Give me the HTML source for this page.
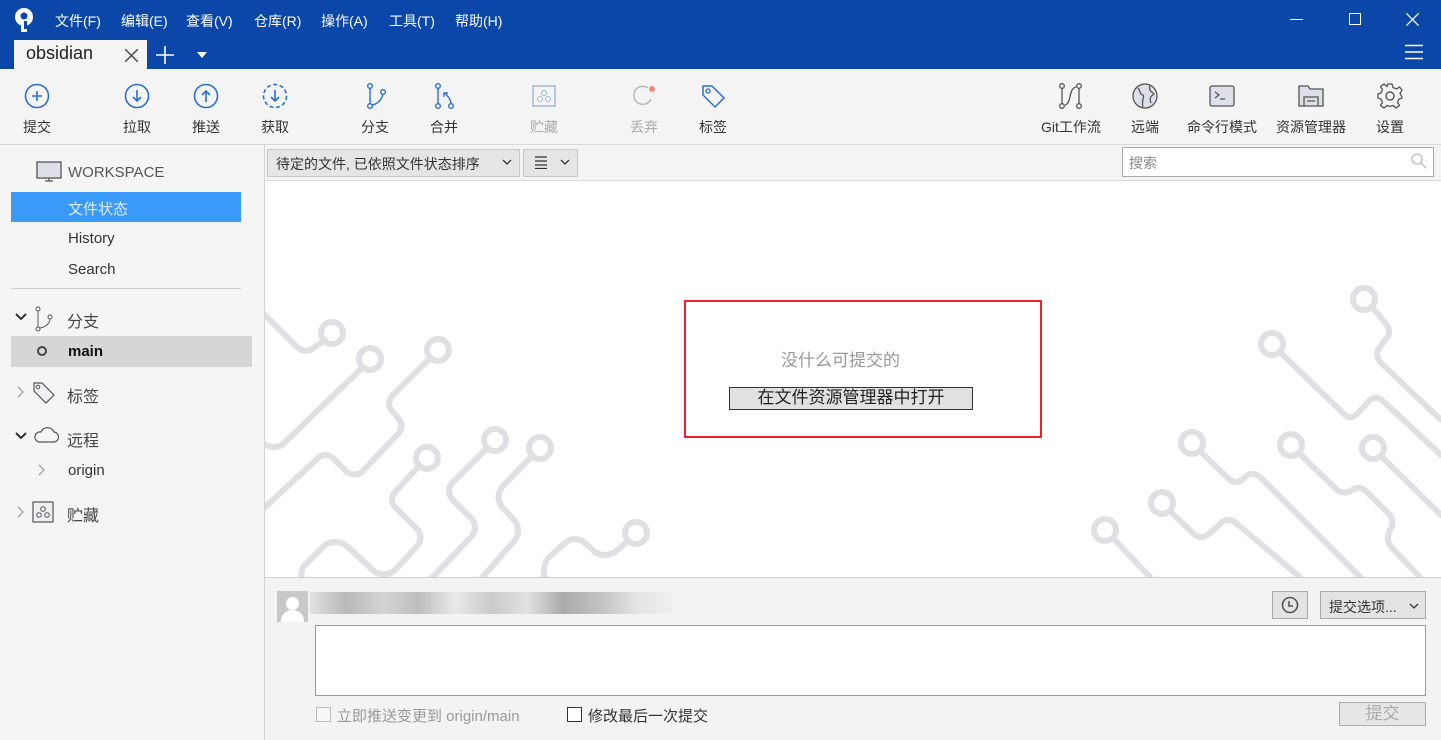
<!DOCTYPE html>
<html><head><meta charset="utf-8"><style>
*{box-sizing:border-box;margin:0;padding:0}
body{width:1441px;height:740px;overflow:hidden;font-family:"Liberation Sans","Noto Sans CJK SC",sans-serif;font-size:14px;color:#333;background:#f4f4f4;position:relative}
.abs{position:absolute}
.title{left:0;top:0;width:1441px;height:69px;background:#0a47a9;color:#fff}
.menu span{position:absolute;top:11px;font-size:14px;color:#fff}
.tb{position:absolute;top:83px;text-align:center;font-size:14px;color:#333;width:70px}
.tb svg{display:block;margin:0 auto 8px}
.side{left:0;top:145px;width:265px;height:595px;background:#f5f5f5;border-right:1px solid #d4d4d4}
.sitem{position:absolute;font-size:15px;color:#333}
</style></head><body>
<div class="abs title">
 <svg class="abs" style="left:13px;top:7px" width="22" height="26" viewBox="0 0 22 26"><circle cx="11" cy="10" r="9" fill="#fff"/><circle cx="11" cy="9" r="3.5" fill="#0a47a9"/><rect x="8" y="14" width="6" height="11" fill="#fff"/><rect x="11" y="14" width="3" height="8" fill="#0a47a9"/></svg>
 <div class="menu"><span style="left:55px">文件(F)</span><span style="left:121px">编辑(E)</span><span style="left:186px">查看(V)</span><span style="left:254px">仓库(R)</span><span style="left:321px">操作(A)</span><span style="left:389px">工具(T)</span><span style="left:455px">帮助(H)</span></div>
 <div class="abs" style="left:1290px;top:19px;width:13px;height:1px;background:#fff"></div>
 <div class="abs" style="left:1349px;top:13px;width:12px;height:12px;border:1px solid #fff"></div>
 <svg class="abs" style="left:1406px;top:13px" width="13" height="13"><path d="M0 0L13 13M13 0L0 13" stroke="#fff" stroke-width="1.3"/></svg>
 <svg class="abs" style="left:1405px;top:44px" width="18" height="16"><path d="M0 1.5H18M0 8H18M0 14.5H18" stroke="#fff" stroke-width="1.6"/></svg>
 <div class="abs" style="left:14px;top:40px;width:133px;height:29px;background:#f4f4f4"></div>
 <span class="abs" style="left:26px;top:43px;font-size:18px;color:#222">obsidian</span>
 <svg class="abs" style="left:125px;top:49px" width="13" height="13"><path d="M0 0L13 13M13 0L0 13" stroke="#555" stroke-width="1.6"/></svg>
 <svg class="abs" style="left:155px;top:45px" width="20" height="20"><path d="M10 1V19M1 10H19" stroke="#fff" stroke-width="1.6"/></svg>
 <svg class="abs" style="left:197px;top:52px" width="10" height="6"><path d="M0 0H10L5 6Z" fill="#fff"/></svg>
</div>
<div class="abs" style="left:0;top:69px;width:1441px;height:76px;background:#f4f4f4;border-bottom:1px solid #d8d8d8"></div>
<div class="tb" style="left:2px"><svg width="26" height="26"><circle cx="13" cy="13" r="11.5" fill="none" stroke="#2a6fd1" stroke-width="1.6"/><path d="M13 8V18M8 13H18" stroke="#2a6fd1" stroke-width="1.6"/></svg>提交</div>
<div class="tb" style="left:102px"><svg width="26" height="26"><circle cx="13" cy="13" r="11.5" fill="none" stroke="#2a6fd1" stroke-width="1.6"/><path d="M13 7V18M9 14L13 18L17 14" fill="none" stroke="#2a6fd1" stroke-width="1.6"/></svg>拉取</div>
<div class="tb" style="left:171px"><svg width="26" height="26"><circle cx="13" cy="13" r="11.5" fill="none" stroke="#2a6fd1" stroke-width="1.6"/><path d="M13 19V8M9 12L13 8L17 12" fill="none" stroke="#2a6fd1" stroke-width="1.6"/></svg>推送</div>
<div class="tb" style="left:240px"><svg width="26" height="26"><circle cx="13" cy="13" r="11.5" fill="none" stroke="#2a6fd1" stroke-width="1.6" stroke-dasharray="4 2.5"/><path d="M13 7V18M9 14L13 18L17 14" fill="none" stroke="#2a6fd1" stroke-width="1.6"/></svg>获取</div>
<div class="tb" style="left:340px"><svg width="26" height="26"><circle cx="8" cy="3" r="2.3" fill="none" stroke="#2a6fd1" stroke-width="1.4"/><circle cx="8" cy="23" r="2.3" fill="none" stroke="#2a6fd1" stroke-width="1.4"/><circle cx="21" cy="9" r="2.3" fill="none" stroke="#2a6fd1" stroke-width="1.4"/><path d="M8 5V21M10 22C16 21 20 16 21 11" fill="none" stroke="#2a6fd1" stroke-width="1.4"/></svg>分支</div>
<div class="tb" style="left:409px"><svg width="26" height="26"><circle cx="7" cy="3" r="2.3" fill="none" stroke="#2a6fd1" stroke-width="1.4"/><circle cx="7" cy="23" r="2.3" fill="none" stroke="#2a6fd1" stroke-width="1.4"/><circle cx="20" cy="23" r="2.3" fill="none" stroke="#2a6fd1" stroke-width="1.4"/><path d="M7 5V21M20 21C20 16 17 14 14 10M13 14V10H17" fill="none" stroke="#2a6fd1" stroke-width="1.4"/></svg>合并</div>
<div class="tb" style="left:509px;color:#aaa"><svg width="26" height="26"><rect x="2" y="3" width="22" height="20" fill="none" stroke="#9fb6d8" stroke-width="1.4"/><circle cx="13" cy="10" r="2.5" fill="none" stroke="#9fb6d8"/><circle cx="9" cy="16" r="2.5" fill="none" stroke="#9fb6d8"/><circle cx="17" cy="16" r="2.5" fill="none" stroke="#9fb6d8"/></svg>贮藏</div>
<div class="tb" style="left:609px;color:#aaa"><svg width="26" height="26"><path d="M20 16A9 9 0 1 1 17 5" fill="none" stroke="#bbb" stroke-width="1.6"/><circle cx="21" cy="6" r="3" fill="#f08a70"/></svg>丢弃</div>
<div class="tb" style="left:678px"><svg width="26" height="26"><path d="M3 3H12L24 15L15 24L3 12Z" fill="none" stroke="#2a6fd1" stroke-width="1.5"/><circle cx="8" cy="8" r="2" fill="none" stroke="#2a6fd1" stroke-width="1.3"/></svg>标签</div>
<div class="tb" style="left:1035px;width:72px"><svg width="26" height="26"><circle cx="4" cy="3" r="2.3" fill="none" stroke="#555" stroke-width="1.3"/><circle cx="4" cy="23" r="2.3" fill="none" stroke="#555" stroke-width="1.3"/><circle cx="21" cy="3" r="2.3" fill="none" stroke="#555" stroke-width="1.3"/><circle cx="21" cy="23" r="2.3" fill="none" stroke="#555" stroke-width="1.3"/><path d="M4 5V21M21 5V21M7 22C14 20 10 6 18 4" fill="none" stroke="#555" stroke-width="1.3"/></svg>Git工作流</div>
<div class="tb" style="left:1110px"><svg width="26" height="26"><circle cx="13" cy="13" r="12" fill="#dde0e8" stroke="#555" stroke-width="1.3"/><path d="M6 5C9 8 7 11 11 12C13 14 9 17 11 24M18 3C16 7 20 9 22 11C19 13 17 15 19 20" fill="none" stroke="#555" stroke-width="1.3"/></svg>远端</div>
<div class="tb" style="left:1187px"><svg width="26" height="26"><rect x="1" y="3" width="24" height="20" rx="2" fill="#dde0e8" stroke="#555" stroke-width="1.3"/><path d="M6 9L10 12L6 15M11 16H16" fill="none" stroke="#555" stroke-width="1.3"/></svg>命令行模式</div>
<div class="tb" style="left:1276px"><svg width="26" height="26"><path d="M1 3H10L12 6H25V23H1Z" fill="#dde0e8" stroke="#555" stroke-width="1.3"/><path d="M6 23V14H20V23M9 18H17" fill="none" stroke="#555" stroke-width="1.3"/></svg>资源管理器</div>
<div class="tb" style="left:1355px"><svg width="26" height="26"><circle cx="13" cy="13" r="4" fill="none" stroke="#555" stroke-width="1.4"/><path d="M11 1H15L16 4.5L19.5 6L22.5 4L25 7L23 10.5L24.5 13L25 15L22 16L20.5 19.5L22.5 22.5L19 25L16 22.5L13 23.5L10 22.5L7 25L3.5 22.5L5.5 19.5L4 16L1 15V11L4 10L5.5 6.5L3.5 3.5L7 1L10 3.5Z" fill="none" stroke="#555" stroke-width="1.3"/></svg>设置</div>
<div class="abs side">
 <svg class="abs" style="left:36px;top:16px" width="26" height="22"><rect x="1" y="1" width="24" height="16" fill="#dde0e8" stroke="#555" stroke-width="1.3"/><path d="M9 20H17M13 17V20" stroke="#555" stroke-width="1.3"/></svg>
 <div class="sitem" style="left:68px;top:19px;font-size:15px;color:#555">WORKSPACE</div>
 <div class="abs" style="left:11px;top:47px;width:230px;height:30px;background:#3a9af9"></div>
 <div class="sitem" style="left:68px;top:53px;color:#dfeeff">文件状态</div>
 <div class="sitem" style="left:68px;top:85px">History</div>
 <div class="sitem" style="left:68px;top:116px">Search</div>
 <div class="abs" style="left:11px;top:143px;width:230px;height:1px;background:#ccc"></div>
 <svg class="abs" style="left:15px;top:168px" width="12" height="8"><path d="M1 1L6 6L11 1" fill="none" stroke="#333" stroke-width="2"/></svg>
 <svg class="abs" style="left:35px;top:161px" width="20" height="26"><circle cx="3" cy="3" r="2" fill="none" stroke="#555"/><circle cx="3" cy="23" r="2" fill="none" stroke="#555"/><circle cx="15" cy="11" r="2" fill="none" stroke="#555"/><path d="M3 5V21M5 22C11 21 15 17 15 13" fill="none" stroke="#555"/></svg>
 <div class="sitem" style="left:67px;top:163px;font-size:16px;color:#444">分支</div>
 <div class="abs" style="left:11px;top:191px;width:241px;height:31px;background:#d6d6d6"></div>
 <div class="abs" style="left:37px;top:201px;width:10px;height:10px;border:2.5px solid #444;border-radius:50%"></div>
 <div class="sitem" style="left:68px;top:198px;font-weight:bold;color:#111">main</div>
 <svg class="abs" style="left:17px;top:241px" width="8" height="12"><path d="M1 1L6 6L1 11" fill="none" stroke="#aaa" stroke-width="1.5"/></svg>
 <svg class="abs" style="left:32px;top:236px" width="24" height="24"><path d="M2 2H10L22 14L14 22L2 10Z" fill="#eef0f4" stroke="#555" stroke-width="1.2"/><circle cx="6" cy="6" r="1.8" fill="none" stroke="#555"/></svg>
 <div class="sitem" style="left:67px;top:238px;font-size:16px;color:#444">标签</div>
 <svg class="abs" style="left:15px;top:287px" width="12" height="8"><path d="M1 1L6 6L11 1" fill="none" stroke="#333" stroke-width="2"/></svg>
 <svg class="abs" style="left:33px;top:281px" width="26" height="18"><path d="M6 16H20A5 5 0 0 0 21 6A7 7 0 0 0 8 6A5 5 0 0 0 6 16Z" fill="none" stroke="#555" stroke-width="1.2"/></svg>
 <div class="sitem" style="left:67px;top:282px;font-size:16px;color:#444">远程</div>
 <svg class="abs" style="left:38px;top:319px" width="8" height="12"><path d="M1 1L6 6L1 11" fill="none" stroke="#aaa" stroke-width="1.5"/></svg>
 <div class="sitem" style="left:68px;top:317px">origin</div>
 <svg class="abs" style="left:17px;top:361px" width="8" height="12"><path d="M1 1L6 6L1 11" fill="none" stroke="#aaa" stroke-width="1.5"/></svg>
 <svg class="abs" style="left:32px;top:356px" width="22" height="22"><rect x="1" y="1" width="20" height="20" fill="#eef0f4" stroke="#555" stroke-width="1.2"/><circle cx="11" cy="8" r="2.3" fill="none" stroke="#555"/><circle cx="7" cy="14" r="2.3" fill="none" stroke="#555"/><circle cx="15" cy="14" r="2.3" fill="none" stroke="#555"/></svg>
 <div class="sitem" style="left:67px;top:357px;font-size:16px;color:#444">贮藏</div>
</div>
<div class="abs" style="left:265px;top:145px;width:1176px;height:36px;background:#f4f4f4;border-bottom:1px solid #d8d8d8"></div>
<div class="abs" style="left:267px;top:149px;width:253px;height:28px;background:#e5e5e5;border:1px solid #c8c8c8;font-size:14px;padding:4px 0 0 8px;color:#333">待定的文件, 已依照文件状态排序</div>
<svg class="abs" style="left:502px;top:159px" width="10" height="6"><path d="M1 1L5 5L9 1" fill="none" stroke="#333" stroke-width="1.3"/></svg>
<div class="abs" style="left:523px;top:149px;width:55px;height:28px;background:#e5e5e5;border:1px solid #c8c8c8"></div>
<svg class="abs" style="left:535px;top:156px" width="12" height="13"><path d="M0 1H12M0 5H12M0 9H12M0 12.5H12" stroke="#333" stroke-width="1.3"/></svg>
<svg class="abs" style="left:560px;top:159px" width="10" height="6"><path d="M1 1L5 5L9 1" fill="none" stroke="#333" stroke-width="1.3"/></svg>
<div class="abs" style="left:1122px;top:147px;width:312px;height:30px;background:#fff;border:1px solid #aaa;font-size:14px;color:#888;padding:5px 0 0 6px">搜索</div>
<svg class="abs" style="left:1411px;top:153px" width="16" height="16"><circle cx="6" cy="6" r="5" fill="none" stroke="#bbb" stroke-width="1.3"/><path d="M10 10L15 15" stroke="#bbb" stroke-width="1.3"/></svg>
<div class="abs" style="left:265px;top:181px;width:1176px;height:396px;background:#fff;overflow:hidden">
<svg width="1176" height="396" viewBox="265 181 1176 396" style="position:absolute;left:0;top:0">
<g fill="none" stroke="#dfe0e4" stroke-width="6" stroke-linecap="round" stroke-linejoin="round">
<circle cx="332" cy="333" r="11"/><path d="M262 312L298 348Q305 353 312 349L325 340"/>
<circle cx="370" cy="359" r="11"/><path d="M362 368L282 445Q273 450 262 443"/>
<circle cx="438" cy="350" r="11"/><path d="M430 358L393 395Q385 404 393 412L398 418Q405 426 398 434L362 472Q355 477 347 472L333 458Q325 452 318 458L262 510"/>
<circle cx="427" cy="458" r="11"/><path d="M419 466L395 492Q389 500 395 507L418 530Q423 537 418 545L397 568Q388 578 375 572L348 547Q337 538 325 545L305 565Q300 570 302 580"/>
<circle cx="495" cy="440" r="11"/><path d="M487 448L452 483Q446 491 452 499L472 519Q478 527 472 536L430 580"/>
<circle cx="540" cy="448" r="11"/><path d="M532 456L502 487Q495 497 502 507L515 521Q521 530 515 540L480 580"/>
<circle cx="636" cy="533" r="11"/><path d="M628 541L615 552Q605 558 595 552L585 543Q575 535 565 543L548 558Q542 566 545 580"/>
<circle cx="1364" cy="299" r="11"/><path d="M1372 307L1387 325Q1392 333 1385 340L1378 350Q1375 357 1382 364L1441 420"/>
<circle cx="1272" cy="344" r="11"/><path d="M1280 352L1345 415Q1350 420 1357 414L1370 400Q1377 395 1384 402L1441 455"/>
<circle cx="1192" cy="443" r="11"/><path d="M1200 451L1230 480Q1237 485 1244 478Q1252 470 1260 477L1360 577"/>
<circle cx="1291" cy="445" r="11"/><path d="M1299 453L1337 490Q1345 495 1352 490Q1360 485 1367 492L1390 515Q1395 523 1390 530Q1385 540 1392 548L1420 577"/>
<circle cx="1373" cy="448" r="11"/><path d="M1381 456L1441 515"/>
<circle cx="1162" cy="503" r="11"/><path d="M1170 511L1195 535Q1202 540 1210 533L1222 522Q1230 517 1237 524L1300 577"/>
<circle cx="1105" cy="530" r="11"/><path d="M1113 538L1150 577"/>
</g></svg>
</div>
<div class="abs" style="left:684px;top:300px;width:358px;height:138px;border:2px solid #e8232e"></div>
<div class="abs" style="left:781px;top:346px;font-size:17px;color:#999">没什么可提交的</div>
<div class="abs" style="left:729px;top:387px;width:244px;height:23px;background:#e1e1e1;border:1px solid #333;font-size:17px;text-align:center;line-height:20px;color:#222">在文件资源管理器中打开</div>
<div class="abs" style="left:265px;top:577px;width:1176px;height:163px;background:#f3f3f3;border-top:1px solid #ccc"></div>
<div class="abs" style="left:277px;top:591px;width:31px;height:31px;background:#c8c8c8;overflow:hidden"><div class="abs" style="left:9px;top:6px;width:13px;height:13px;border-radius:50%;background:#fff"></div><div class="abs" style="left:4px;top:19px;width:23px;height:20px;border-radius:11px 11px 0 0;background:#fff"></div></div>
<div class="abs" style="left:310px;top:592px;width:362px;height:22px;background:linear-gradient(90deg,#ddd,#aaa 10%,#ccc 20%,#b0b0b0 30%,#e6e6e6 40%,#c0c0c0 50%,#ddd 60%,#999 70%,#b5b5b5 80%,#e0e0e0 90%,#eee);opacity:.8"></div>
<div class="abs" style="left:1272px;top:591px;width:36px;height:28px;background:#e3e3e3;border:1px solid #aaa"></div>
<svg class="abs" style="left:1281px;top:596px" width="18" height="18"><circle cx="9" cy="9" r="7.5" fill="none" stroke="#555" stroke-width="1.6"/><path d="M8 5V10H12" fill="none" stroke="#555" stroke-width="1.6"/></svg>
<div class="abs" style="left:1320px;top:591px;width:106px;height:28px;background:#e3e3e3;border:1px solid #aaa;font-size:14px;padding:5px 0 0 8px;color:#333">提交选项...</div>
<svg class="abs" style="left:1409px;top:603px" width="10" height="6"><path d="M1 1L5 5L9 1" fill="none" stroke="#333" stroke-width="1.3"/></svg>
<div class="abs" style="left:315px;top:625px;width:1111px;height:71px;background:#fff;border:1px solid #7a9fd2"></div>
<div class="abs" style="left:316px;top:707px;width:15px;height:15px;border:1px solid #bbb;background:#f8f8f8"></div>
<div class="abs" style="left:337px;top:705px;font-size:15px;color:#999">立即推送变更到 origin/main</div>
<div class="abs" style="left:567px;top:707px;width:15px;height:15px;border:1px solid #333;background:#fff"></div>
<div class="abs" style="left:588px;top:705px;font-size:15px;color:#333">修改最后一次提交</div>
<div class="abs" style="left:1339px;top:702px;width:87px;height:24px;background:#e6e6e6;border:1px solid #aaa;text-align:center;font-size:17px;color:#aaa;line-height:22px">提交</div>
</body></html>
